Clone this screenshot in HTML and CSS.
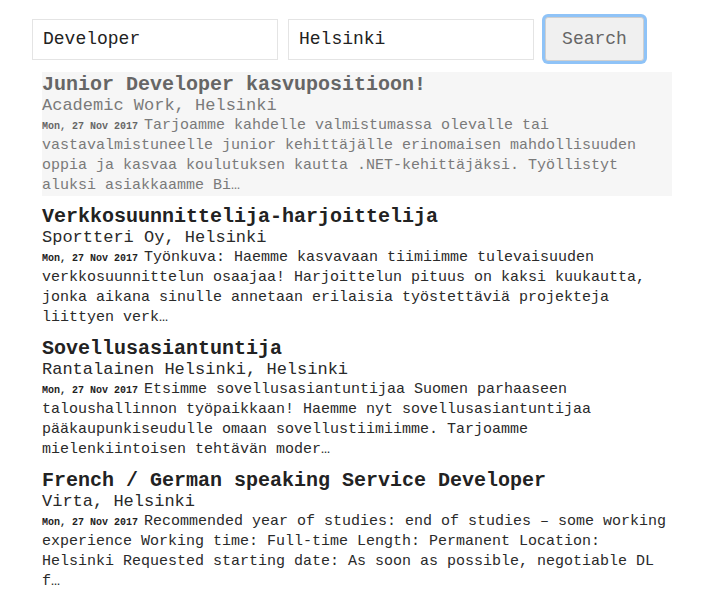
FILE: index.html
```html
<!DOCTYPE html>
<html>
<head>
<meta charset="utf-8">
<link rel="stylesheet" href="styles.css">
</head>
<body>
<div class="page">
  <form class="search">
    <input class="field" type="text" value="Developer">
    <input class="field" type="text" value="Helsinki">
    <button class="btn" type="button">Search</button>
  </form>
  <ul class="jobs">
    <li class="job job-active">
      <h2 class="title">Junior Developer kasvupositioon!</h2>
      <div class="company">Academic Work, Helsinki</div>
      <p class="desc"><span class="date">Mon, 27 Nov 2017 </span>Tarjoamme kahdelle valmistumassa olevalle tai vastavalmistuneelle junior kehittäjälle erinomaisen mahdollisuuden oppia ja kasvaa koulutuksen kautta .NET-kehittäjäksi. Työllistyt aluksi asiakkaamme Bi…</p>
    </li>
    <li class="job">
      <h2 class="title">Verkkosuunnittelija-harjoittelija</h2>
      <div class="company">Sportteri Oy, Helsinki</div>
      <p class="desc"><span class="date">Mon, 27 Nov 2017 </span>Työnkuva: Haemme kasvavaan tiimiimme tulevaisuuden verkkosuunnittelun osaajaa! Harjoittelun pituus on kaksi kuukautta, jonka aikana sinulle annetaan erilaisia työstettäviä projekteja liittyen verk…</p>
    </li>
    <li class="job">
      <h2 class="title">Sovellusasiantuntija</h2>
      <div class="company">Rantalainen Helsinki, Helsinki</div>
      <p class="desc"><span class="date">Mon, 27 Nov 2017 </span>Etsimme sovellusasiantuntijaa Suomen parhaaseen taloushallinnon työpaikkaan! Haemme nyt sovellusasiantuntijaa pääkaupunkiseudulle omaan sovellustiimiimme. Tarjoamme mielenkiintoisen tehtävän moder…</p>
    </li>
    <li class="job">
      <h2 class="title">French / German speaking Service Developer</h2>
      <div class="company">Virta, Helsinki</div>
      <p class="desc"><span class="date">Mon, 27 Nov 2017 </span>Recommended year of studies: end of studies – some working experience Working time: Full-time Length: Permanent Location: Helsinki Requested starting date: As soon as possible, negotiable DL f…</p>
    </li>
  </ul>
</div>
</body>
</html>
```
FILE: styles.css
```css
html, body {
  margin: 0;
  padding: 0;
  background: #ffffff;
}
body {
  font-family: "Liberation Mono", "Courier New", monospace;
  color: #222;
}
.page {
  padding: 17px 0 0 0;
}
.search {
  display: flex;
  align-items: center;
  margin: 0 0 0 32px;
  height: 44px;
}
.field {
  box-sizing: border-box;
  width: 246px;
  height: 41px;
  margin: 0 10px 0 0;
  padding: 0 10px;
  border: 1px solid #e4e4e4;
  border-radius: 0;
  font-family: "Liberation Mono", "Courier New", monospace;
  font-size: 18px;
  color: #222;
  background: #fff;
  outline: none;
}
.btn {
  box-sizing: border-box;
  width: 99px;
  height: 44px;
  margin-left: 1px;
  border: 1px solid #cfcfcf;
  border-radius: 3px;
  background: #f0f0f0;
  box-shadow: 0 0 0 3px #8fc3f7;
  font-family: "Liberation Mono", "Courier New", monospace;
  font-size: 18px;
  color: #666;
  padding: 0;
}
.jobs {
  list-style: none;
  margin: 11px 0 0 42px;
  padding: 0;
  width: 630px;
  display: flex;
  flex-direction: column;
  gap: 8px;
}
.job {
  padding-top: 3px;
  line-height: 20px;
}
.job-active {
  background: #f6f6f6;
}
.title {
  margin: 0;
  font-size: 20px;
  font-weight: bold;
  line-height: 20px;
  color: #222;
}
.company {
  font-size: 17px;
  line-height: 21px;
  color: #2a2a2a;
}
.desc {
  margin: 0;
  font-size: 15px;
  line-height: 20px;
  color: #2a2a2a;
}
.date {
  font-size: 10px;
  font-weight: bold;
  line-height: 10px;
  color: #222;
}
.job-active .title {
  color: #666;
}
.job-active .company,
.job-active .desc {
  color: #7a7a7a;
}
.job-active .date {
  color: #666;
}
```
